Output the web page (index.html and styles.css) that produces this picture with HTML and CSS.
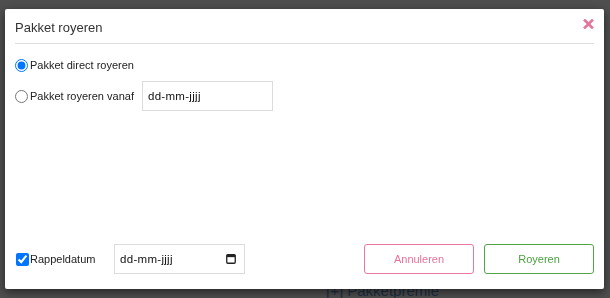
FILE: index.html
```html
<!DOCTYPE html>
<html lang="nl">
<head>
<meta charset="utf-8">
<title>Pakket royeren</title>
<link rel="stylesheet" href="styles.css">
</head>
<body>
<div class="page">
  <div class="page-heading">[+] Pakketpremie</div>
</div>
<div class="overlay">
  <div class="modal">
    <div class="modal-header">
      <h4 class="modal-title">Pakket royeren</h4>
      <button class="close" aria-label="Sluiten">
        <svg width="11" height="10" viewBox="0 0 11 10"><path d="M2 1.5 L9 8.5 M9 1.5 L2 8.5" stroke="#e6739a" stroke-width="2.6" stroke-linecap="square"/></svg>
      </button>
    </div>
    <div class="modal-body">
      <label class="row">
        <input type="radio" name="mode" class="radio" checked>
        <span class="label">Pakket direct royeren</span>
      </label>
      <div class="row">
        <input type="radio" name="mode" class="radio">
        <span class="label">Pakket royeren vanaf</span>
        <div class="date-field date-field--vanaf"><span class="date-text">dd-mm-jjjj</span></div>
      </div>
    </div>
    <div class="modal-footer">
      <div class="footer-left">
        <input type="checkbox" class="check" checked>
        <span class="label label--rappel">Rappeldatum</span>
        <div class="date-field">
          <span class="date-text">dd-mm-jjjj</span>
          <svg class="cal" width="10" height="10" viewBox="0 0 10 10"><rect x="0.75" y="0.75" width="8.5" height="8.5" rx="1" fill="none" stroke="#222" stroke-width="1.3"/><rect x="0.75" y="0.75" width="8.5" height="2.4" fill="#222"/></svg>
        </div>
      </div>
      <div class="footer-right">
        <button class="btn btn--cancel">Annuleren</button>
        <button class="btn btn--ok">Royeren</button>
      </div>
    </div>
  </div>
</div>
</body>
</html>
```
FILE: styles.css
```css
html, body {
  margin: 0;
  padding: 0;
}
body {
  background: #4f4f4f;
  font-family: "Liberation Sans", Arial, sans-serif;
  width: 610px;
  height: 298px;
  overflow: hidden;
}
.page {
  padding: 282px 0 0 326px;
}
.page-heading {
  font-size: 15px;
  line-height: 17px;
  color: #1c3044;
}
.overlay {
  position: fixed;
  inset: 0;
}
.modal {
  position: absolute;
  left: 5px;
  top: 9px;
  width: 599px;
  height: 280px;
  background: #fff;
  border-radius: 2px;
  box-shadow: 0 3px 10px rgba(0, 0, 0, 0.55);
  display: flex;
  flex-direction: column;
  box-sizing: border-box;
  padding: 0 10px 15px 10px;
}
.modal-header {
  display: flex;
  justify-content: space-between;
  align-items: flex-start;
  padding: 11px 0 8px 0;
  border-bottom: 1px solid #dedede;
}
.modal-title {
  margin: 0;
  font-size: 13px;
  line-height: 15px;
  font-weight: normal;
  color: #333;
}
.close {
  border: 0;
  background: none;
  padding: 0;
  margin: -1px 0 0 0;
  width: 11px;
  height: 10px;
  display: block;
}
.close svg {
  display: block;
}
.modal-body {
  flex: 1;
  padding-top: 6px;
  display: flex;
  flex-direction: column;
  gap: 1px;
}
.row {
  display: flex;
  align-items: center;
  height: 30px;
}
.radio {
  width: 13px;
  height: 13px;
  margin: 0 2px 0 0;
}
.label {
  font-size: 11px;
  color: #222;
}
.date-field {
  box-sizing: border-box;
  width: 131px;
  height: 30px;
  border: 1px solid #dcdcdc;
  padding: 0 8px 0 5px;
  display: flex;
  align-items: center;
  justify-content: space-between;
}
.date-field--vanaf {
  margin-left: 8px;
}
.date-text {
  font-size: 11.5px;
  letter-spacing: 0.3px;
  color: #111;
}
.cal {
  display: block;
}
.modal-footer {
  display: flex;
  justify-content: space-between;
  align-items: center;
}
.footer-left {
  display: flex;
  align-items: center;
  padding-left: 1px;
}
.check {
  width: 13px;
  height: 13px;
  margin: 0 1px 0 0;
}
.label--rappel {
  width: 84px;
}
.footer-right {
  display: flex;
  gap: 10px;
}
.btn {
  width: 110px;
  height: 30px;
  background: #fff;
  border-radius: 3px;
  font-family: "Liberation Sans", Arial, sans-serif;
  font-size: 11px;
  padding: 0;
}
.btn--cancel {
  border: 1px solid #e8789c;
  color: #e6739a;
}
.btn--ok {
  border: 1px solid #53a447;
  color: #4c9f41;
}
```
